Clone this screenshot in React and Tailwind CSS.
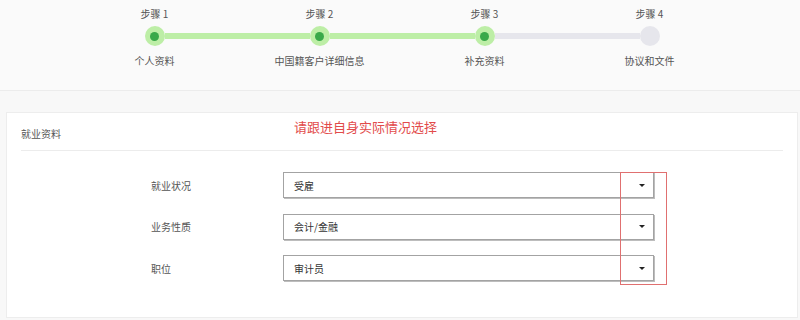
import React from 'react';

const steps = [
  { title: '步骤 1', label: '个人资料', state: 'done' },
  { title: '步骤 2', label: '中国籍客户详细信息', state: 'done' },
  { title: '步骤 3', label: '补充资料', state: 'current' },
  { title: '步骤 4', label: '协议和文件', state: 'todo' },
];

const fields = [
  { label: '就业状况', value: '受雇' },
  { label: '业务性质', value: '会计/金融' },
  { label: '职位', value: '审计员' },
];

const GREEN_LIGHT = 'bg-[#bdeea6]';
const GRAY = 'bg-[#e6e6ec]';

function Step({ step, index }) {
  // line colour on each side of the dot
  const leftColor = index === 0 ? 'bg-transparent' : step.state === 'todo' ? GRAY : GREEN_LIGHT;
  const rightColor = index === steps.length - 1 ? 'bg-transparent' : step.state === 'done' ? GREEN_LIGHT : GRAY;

  return (
    <div className="flex w-[165px] flex-col items-center">
      <div className="h-[14px] text-[10px] leading-[14px] text-[#555]">{step.title}</div>
      <div className="mt-[5px] flex w-full items-center">
        <div className={`h-[6px] flex-1 ${leftColor}`}></div>
        <div
          className={`flex h-[20px] w-[20px] items-center justify-center rounded-full ${
            step.state === 'todo' ? GRAY : GREEN_LIGHT
          }`}
        >
          {step.state !== 'todo' && <div className="h-[9px] w-[9px] rounded-full bg-[#3aa94a]"></div>}
        </div>
        <div className={`h-[6px] flex-1 ${rightColor}`}></div>
      </div>
      <div className="mt-[8px] h-[14px] text-[10px] leading-[14px] text-[#555]">{step.label}</div>
    </div>
  );
}

function SelectBox({ value }) {
  return (
    <div className="flex h-[26px] w-[371px] items-center justify-between border border-[#a3a3a3] bg-white pl-[10px] pr-[8px] shadow-[1px_1px_0_#bdbdbd]">
      <span className="text-[10px] text-[#333]">{value}</span>
      <svg width="6" height="3" viewBox="0 0 6 3">
        <path d="M0 0 L6 0 L3 3 Z" fill="#222" />
      </svg>
    </div>
  );
}

export default function App() {
  return (
    <div
      className="h-[320px] w-[800px] bg-[#f8f8f8]"
      style={{ fontFamily: '"Noto Sans CJK SC", "Noto Sans", sans-serif' }}
    >
      {/* Steps */}
      <div className="h-[91px] border-b border-[#ececec] bg-[#fafafa] pt-[7px]">
        <div className="ml-[72px] flex w-[660px]">
          {steps.map((step, i) => (
            <Step key={step.title} step={step} index={i} />
          ))}
        </div>
      </div>

      {/* Employment card */}
      <div className="relative ml-[6px] mr-[2px] mt-[21px] h-[206px] border border-[#ededed] bg-white px-[14px]">
        <div className="flex h-[38px] border-b border-[#ececec]">
          <div className="w-[273px] pt-[14px] text-[10px] leading-[14px] text-[#555]">就业资料</div>
          <div className="pt-[5px] text-[13px] leading-[18px] text-[#e24b4b]">请跟进自身实际情况选择</div>
        </div>

        <div className="flex flex-col gap-[15.5px] pl-[130px] pt-[21px]">
          {fields.map((f) => (
            <div key={f.label} className="flex items-center">
              <div className="w-[132px] text-[10px] text-[#555]">{f.label}</div>
              <SelectBox value={f.value} />
            </div>
          ))}
        </div>

        {/* red annotation box */}
        <div className="absolute left-[613px] top-[59px] h-[113px] w-[47px] border border-[#e07070]"></div>
      </div>
    </div>
  );
}
